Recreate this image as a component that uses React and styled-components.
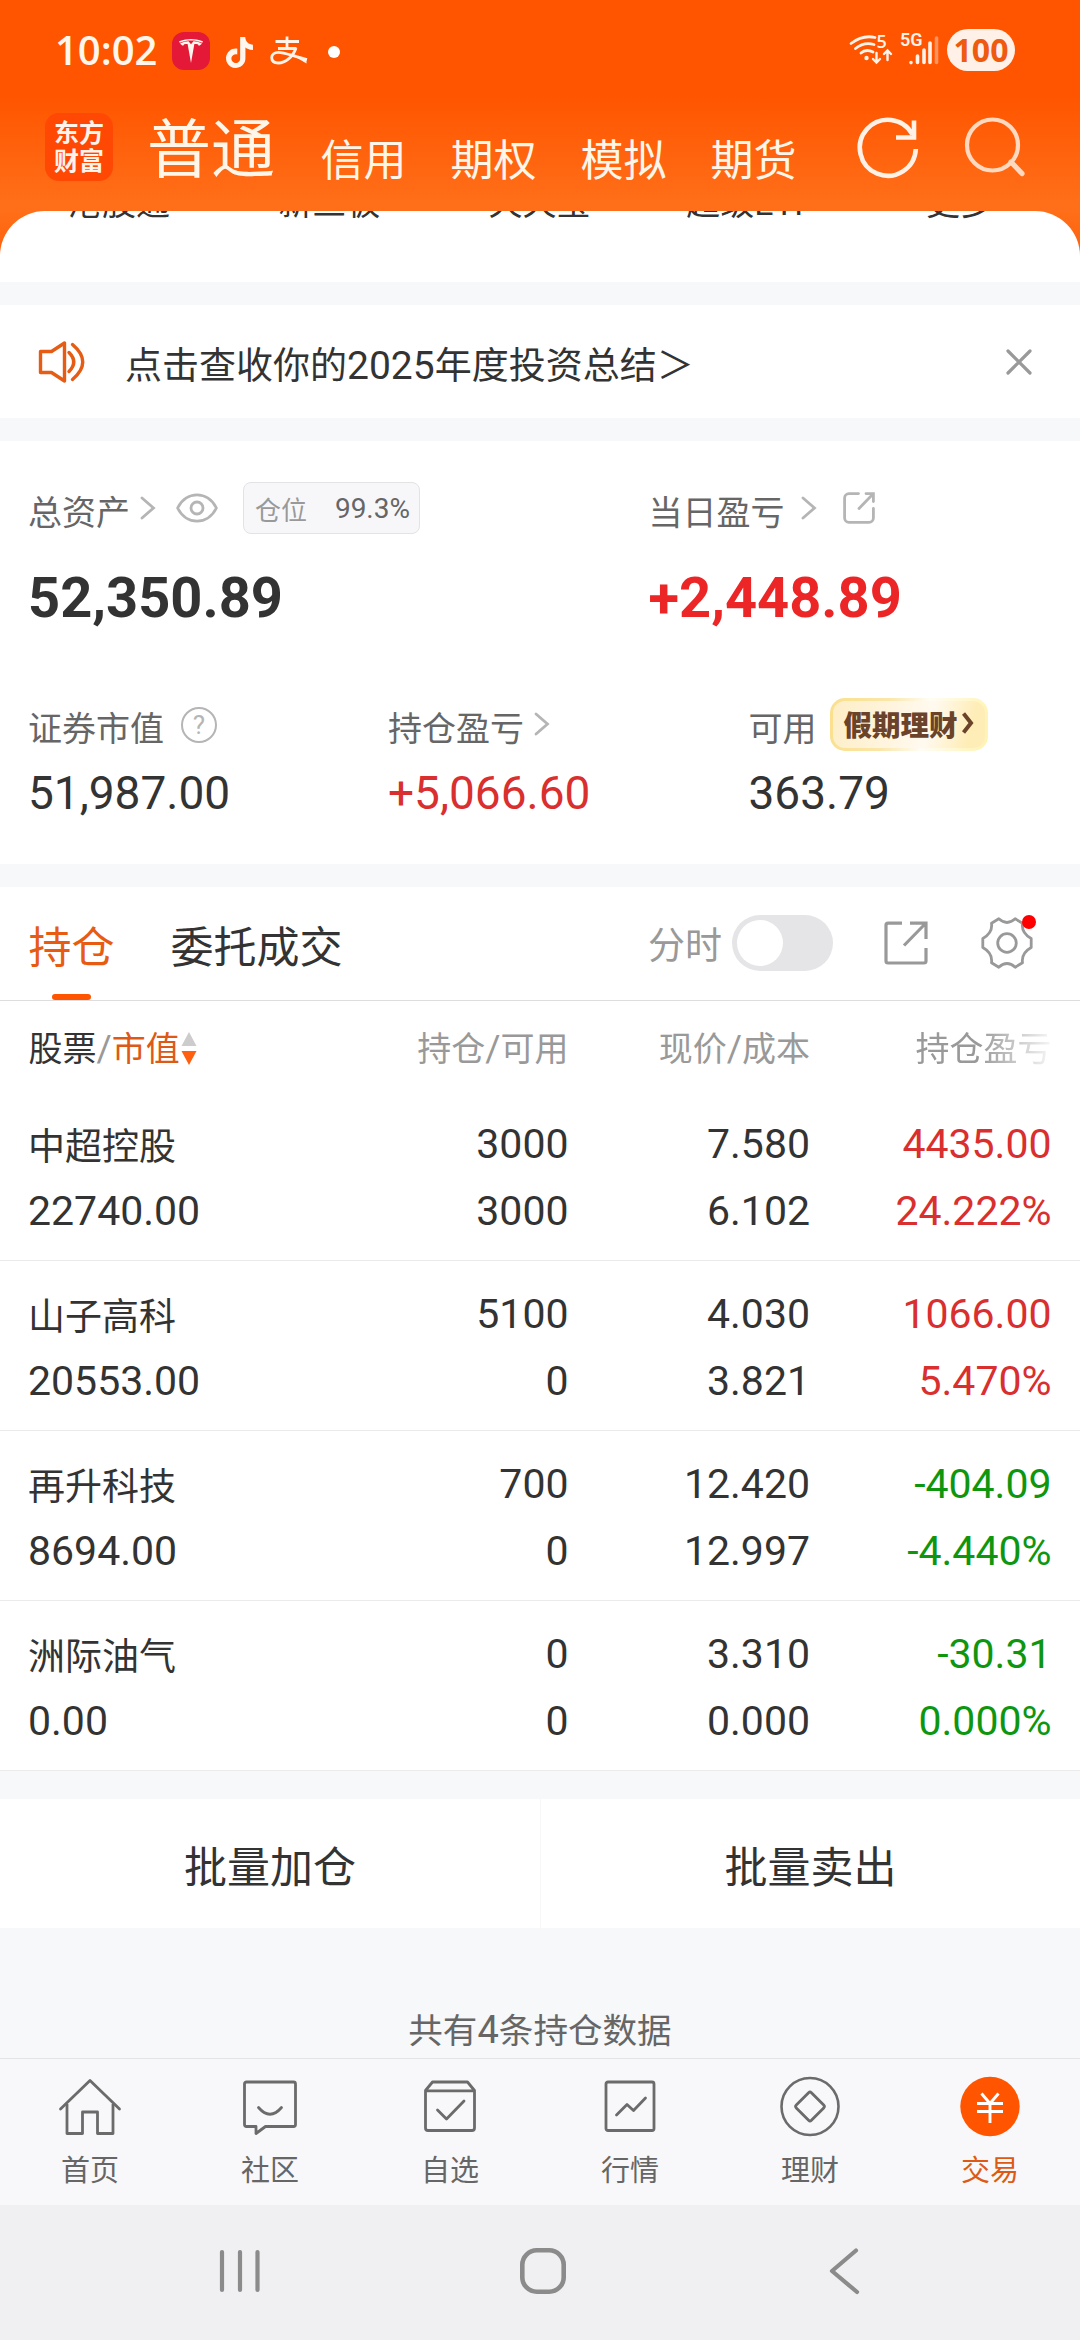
import React from "react";
import styled, { createGlobalStyle } from "styled-components";
import { SiTesla, SiTiktok } from "react-icons/si";

const shortcuts = ["港股通", "新三板", "天天宝", "超级ETF", "更多"];
const accounts = ["信用", "期权", "模拟", "期货"];

const holdings = [
  { name: "中超控股", value: "22740.00", qty: "3000", usable: "3000", price: "7.580", cost: "6.102", profit: "4435.00", rate: "24.222%", up: true },
  { name: "山子高科", value: "20553.00", qty: "5100", usable: "0", price: "4.030", cost: "3.821", profit: "1066.00", rate: "5.470%", up: true },
  { name: "再升科技", value: "8694.00", qty: "700", usable: "0", price: "12.420", cost: "12.997", profit: "-404.09", rate: "-4.440%", up: false },
  { name: "洲际油气", value: "0.00", qty: "0", usable: "0", price: "3.310", cost: "0.000", profit: "-30.31", rate: "0.000%", up: false },
];

const navItems = [
  { label: "首页", icon: <HomeIcon /> },
  { label: "社区", icon: <ChatIcon /> },
  { label: "自选", icon: <BoxIcon /> },
  { label: "行情", icon: <MarketIcon /> },
  { label: "理财", icon: <CoinIcon /> },
  { label: "交易", icon: <TradeIcon />, active: true },
];

export default function App() {
  return (
    <Screen>
      <GlobalStyle />
      <Header>
        <StatusBar>
          <Clock>10:02</Clock>
          <TeslaBadge>
            <SiTesla size={24} />
          </TeslaBadge>
          <TiktokSlot>
            <SiTiktok size={31} />
          </TiktokSlot>
          <AlipayIcon />
          <MoreDot />
          <StatusRight>
            <NetworkIcons />
            <Battery>100</Battery>
          </StatusRight>
        </StatusBar>
        <AccountBar>
          <Logo>
            <span>东方</span>
            <span>财富</span>
          </Logo>
          <AccountTabs>
            <AccountTab $active>普通</AccountTab>
            {accounts.map((a) => (
              <AccountTab key={a}>{a}</AccountTab>
            ))}
          </AccountTabs>
          <HeaderIcons />
        </AccountBar>
      </Header>

      <ShortcutWrap>
        <ShortcutCard>
          {shortcuts.map((s) => (
            <span key={s}>{s}</span>
          ))}
        </ShortcutCard>
      </ShortcutWrap>
      <Gap />

      <Notice>
        <SpeakerIcon />
        <NoticeText>
          点击查收你的<Num>2025</Num>年度投资总结＞
        </NoticeText>
        <CloseIcon />
      </Notice>
      <Gap />

      <Assets>
        <TopGrid>
          <div>
            <LabelRow>
              <Label>总资产</Label>
              <Chevron $left={10} />
              <EyeIcon />
              <Position>
                <span>仓位</span>
                <b>99.3%</b>
              </Position>
            </LabelRow>
            <Total>52,350.89</Total>
          </div>
          <div>
            <LabelRow>
              <Label>当日盈亏</Label>
              <Chevron $left={16} />
              <SmallShareIcon />
            </LabelRow>
            <Total $up>+2,448.89</Total>
          </div>
        </TopGrid>
        <SubGrid>
          <div>
            <LabelRow>
              <Label>证券市值</Label>
              <Question>?</Question>
            </LabelRow>
            <Amount>51,987.00</Amount>
          </div>
          <div>
            <LabelRow>
              <Label>持仓盈亏</Label>
              <Chevron $left={10} />
            </LabelRow>
            <Amount $up>+5,066.60</Amount>
          </div>
          <div>
            <LabelRow>
              <Label>可用</Label>
              <Promo>
                假期理财
                <svg width="12" height="22" viewBox="0 0 12 22" fill="none" stroke="#6a432a" strokeWidth="4">
                  <path d="M1.5 1.5L9 11L1.5 20.5" />
                </svg>
              </Promo>
            </LabelRow>
            <Amount>363.79</Amount>
          </div>
        </SubGrid>
      </Assets>
      <Gap />

      <Tabs>
        <Tab $active>持仓</Tab>
        <Tab>委托成交</Tab>
        <Tools>
          <ToolLabel>分时</ToolLabel>
          <Toggle>
            <i />
          </Toggle>
          <ShareIcon />
          <GearWrap>
            <GearIcon />
            <RedDot />
          </GearWrap>
        </Tools>
      </Tabs>

      <TableHead>
        <SortCell>
          股票<Slash>/</Slash>
          <em>市值</em>
          <svg width="16" height="34" viewBox="0 0 16 34">
            <path d="M8 0L15.5 14H0.5Z" fill="#cccccc" />
            <path d="M8 33L15.5 19H0.5Z" fill="#ff5f0f" />
          </svg>
        </SortCell>
        <span>
          持仓<Slash>/</Slash>可用
        </span>
        <span>
          现价<Slash>/</Slash>成本
        </span>
        <FadeCell>持仓盈亏</FadeCell>
      </TableHead>
      {holdings.map((h) => (
        <Row key={h.name}>
          <Cell>
            <Name>{h.name}</Name>
            <span>{h.value}</span>
          </Cell>
          <Cell $right>
            <span>{h.qty}</span>
            <span>{h.usable}</span>
          </Cell>
          <Cell $right>
            <span>{h.price}</span>
            <span>{h.cost}</span>
          </Cell>
          <Cell $right $color={h.up ? "#d92f2f" : "#0f960f"}>
            <span>{h.profit}</span>
            <span>{h.rate}</span>
          </Cell>
        </Row>
      ))}

      <Batch>
        <BatchButton>批量加仓</BatchButton>
        <BatchButton>批量卖出</BatchButton>
      </Batch>
      <Summary>
        共有<Num $size={38}>4</Num>条持仓数据
      </Summary>

      <Nav>
        {navItems.map((n) => (
          <NavItem key={n.label} $active={n.active}>
            {n.icon}
            <span>{n.label}</span>
          </NavItem>
        ))}
      </Nav>
      <SystemBar>
        <svg width="46" height="50" viewBox="0 0 46 50" stroke="#8b8b8b" strokeWidth="4.2" strokeLinecap="round">
          <path d="M5 6V44M23 6V44M40.5 6V44" />
        </svg>
        <svg width="50" height="50" viewBox="0 0 50 50" fill="none" stroke="#8b8b8b" strokeWidth="4.6">
          <rect x="4.3" y="4.3" width="41.4" height="41.4" rx="14.5" />
        </svg>
        <svg width="46" height="50" viewBox="0 0 46 50" fill="none" stroke="#8b8b8b" strokeWidth="4.2" strokeLinecap="round" strokeLinejoin="round">
          <path d="M34 4.5L10 25L35 46" />
        </svg>
      </SystemBar>
    </Screen>
  );
}

/* ---------- icons ---------- */

function AlipayIcon() {
  return (
    <svg width="38" height="30" viewBox="0 0 38 30" fill="none" stroke="#fff3ea" strokeWidth="2.8">
      <path d="M5.5 5.5H29M17 0.5V12.5M8 12.5H26.5" />
      <path d="M26 12C23 21 15 27 8.5 27C3.5 27 1.7 24.5 1.7 21.5C1.7 18.5 4.5 16.3 8.5 16.3C15 16.3 22 20 37 23.5" />
      <path d="M22 19L36.5 22.5V27.5Z" fill="#fff3ea" stroke="none" />
    </svg>
  );
}

function NetworkIcons() {
  return (
    <svg width="96" height="40" viewBox="0 0 96 40" fill="none" stroke="#fff3ea" strokeWidth="2.8" strokeLinecap="round">
      <path d="M4 13.5Q16 4.500 28 7.500" />
      <path d="M8.5 18.500Q17 11.500 27 14.500" />
      <path d="M14 23Q19 18.500 26 22" />
      <circle cx="19.5" cy="28" r="2.2" fill="#fff3ea" stroke="none" />
      <path d="M29.5 23V32M26 29L29.5 32.5L33 29" strokeWidth="2.4" />
      <path d="M40.500 30V21M37 24L40.5 20.5L44 24" strokeWidth="2.4" />
      <text x="29.500" y="18" fontSize="18" fontWeight="600" fontFamily="Open Sans, sans-serif" fill="#fff3ea" stroke="none">5</text>
      <text x="53" y="15.5" fontSize="18" fontWeight="600" fontFamily="Roboto, sans-serif" fill="#fff3ea" stroke="none">5G</text>
      <g strokeWidth="3.6">
        <path d="M64 32.500V32.600M70.500 26V32.500M77 20V32.500M83 13V32.500" />
        <path d="M89.500 8V32.500" opacity="0.4" />
      </g>
    </svg>
  );
}

function HeaderIcons() {
  return (
    <HeaderSvg width="176" height="72" viewBox="0 0 176 72" fill="none" stroke="#fff1e6">
      <path d="M63.8 36A28 28 0 1 1 60.500 21.500" strokeWidth="4.6" />
      <path d="M62 7.500V24.500H44" strokeWidth="4.6" />
      <g stroke="#ffd9bf" strokeWidth="4.2">
        <circle cx="140.5" cy="32" r="25.5" />
        <path d="M159 49L170 60.5" strokeWidth="5.2" strokeLinecap="round" />
      </g>
    </HeaderSvg>
  );
}

function SpeakerIcon() {
  return (
    <svg width="50" height="44" viewBox="0 0 50 44" fill="none" stroke="#e65c14" strokeWidth="3.4" strokeLinejoin="round" strokeLinecap="round">
      <path d="M3.500 11.500H14.500L27.500 3V41L14.500 32.500H3.500Z" />
      <path d="M32 12.500Q41.500 22 32 31.500" />
      <path d="M35.500 4.500Q56 22 35.500 39.500" />
    </svg>
  );
}

function CloseIcon() {
  return (
    <svg width="28" height="28" viewBox="0 0 28 28" stroke="#999999" strokeWidth="3.2" strokeLinecap="round">
      <path d="M3 3L25 25M25 3L3 25" />
    </svg>
  );
}

function ChevronSvg({ className }) {
  return (
    <svg className={className} width="16" height="24" viewBox="0 0 16 24" fill="none" stroke="#b5b5b5" strokeWidth="2.8" strokeLinecap="round">
      <path d="M2 2L13.5 12L2 22" />
    </svg>
  );
}

function EyeSvg({ className }) {
  return (
    <svg className={className} width="42" height="30" viewBox="0 0 42 30" fill="none" stroke="#b5b5b5" strokeWidth="2.8">
      <path d="M1.6 15C10 -2.500 32 -2.500 40.4 15C32 32.500 10 32.500 1.6 15Z" strokeLinejoin="round" />
      <circle cx="21" cy="15" r="6" />
    </svg>
  );
}

function SmallShareSvg({ className }) {
  return (
    <svg className={className} width="32" height="32" viewBox="0 0 32 32" fill="none" stroke="#b5b5b5" strokeWidth="2.8" strokeLinecap="round">
      <path d="M15.5 1.6H6A4.4 4.4 0 0 0 1.6 6V26A4.4 4.4 0 0 0 6 30.4H26A4.4 4.4 0 0 0 30.4 26V16.5" />
      <path d="M23 1.6H30.4V9.5M30 2L16 16.5" />
    </svg>
  );
}

function ShareSvg({ className }) {
  return (
    <svg className={className} width="44" height="44" viewBox="0 0 44 44" fill="none" stroke="#999999" strokeWidth="3.2">
      <path d="M18 2.2H4Q2 2.2 2 4.2V40Q2 42 4 42H40Q42 42 42 40V27" />
      <path d="M26 2.2H42V18M41 3L20 24.5" />
    </svg>
  );
}

function GearIcon() {
  return (
    <svg width="52" height="52" viewBox="0 0 52 52" fill="none" stroke="#999999" strokeWidth="2.8" strokeLinejoin="round">
      <path d="M17.8 1.8L10.5 6.2C11.5 13 9 17.5 1.8 21.5V30.5C9 34.5 11.5 39 10.5 45.8L17.8 50.2C23 45.5 29 45.5 34.2 50.2L41.5 45.8C40.5 39 43 34.5 50.2 30.5V21.5C43 17.5 40.5 13 41.5 6.2L34.2 1.8C29 6.5 23 6.5 17.8 1.8Z" />
      <circle cx="26" cy="26" r="9.3" />
    </svg>
  );
}

function HomeIcon() {
  return (
    <NavSvg>
      <path d="M2.5 35L32 6.5L61.5 35" strokeLinecap="round" />
      <path d="M9 30V59.5H24.5V38H39.5V59.5H55V30" />
    </NavSvg>
  );
}

function ChatIcon() {
  return (
    <NavSvg>
      <path d="M8.5 8H55.5Q57.5 8 57.5 10V50.5Q57.5 52.5 55.5 52.5H27.5L18 59.5V52.5H8.5Q6.5 52.5 6.5 50.5V10Q6.5 8 8.5 8Z" />
      <path d="M20.5 33.5Q32 47 43.5 33.5" strokeLinecap="round" />
    </NavSvg>
  );
}

function BoxIcon() {
  return (
    <NavSvg>
      <path d="M7.5 16.5L14.5 8H49.5L56.5 16.5V54Q56.5 56.5 54 56.5H10Q7.5 56.5 7.5 54ZM7.5 16.8H56.5" />
      <path d="M19.5 36L28.5 45L46 27" strokeLinecap="round" />
    </NavSvg>
  );
}

function MarketIcon() {
  return (
    <NavSvg>
      <rect x="8" y="8" width="48" height="48.5" rx="2" />
      <path d="M18.5 41L29 30.5L35.5 36.5L47.5 24" strokeLinecap="round" />
    </NavSvg>
  );
}

function CoinIcon() {
  return (
    <NavSvg>
      <circle cx="32" cy="32.5" r="28.5" strokeWidth="2.6" />
      <rect x="21.3" y="21.8" width="21.4" height="21.4" rx="2" transform="rotate(45 32 32.5)" />
    </NavSvg>
  );
}

function TradeIcon() {
  return (
    <NavSvg>
      <circle cx="32" cy="32.5" r="29.7" fill="#ff5500" stroke="none" />
      <g stroke="#ffffff" strokeWidth="2.9">
        <path d="M23.5 19.5L32 29.5L40.5 19.5M19 29.5H45M19 37.5H45M32 29.5V49" />
      </g>
    </NavSvg>
  );
}

function NavSvg({ children }) {
  return (
    <svg width="64" height="64" viewBox="0 0 64 64" fill="none" stroke="#6b6b6b" strokeWidth="2.8" strokeLinejoin="round">
      {children}
    </svg>
  );
}

/* ---------- styles ---------- */

const GlobalStyle = createGlobalStyle`
  * {
    box-sizing: border-box;
  }

  body {
    margin: 0;
    background: #f7f8fa;
  }

  svg {
    display: block;
    flex: none;
  }
`;

const Screen = styled.div`
  width: 1080px;
  height: 2340px;
  display: flex;
  flex-direction: column;
  overflow: hidden;
  background: #f7f8fa;
  color: #333333;
  font-family: Roboto, "Noto Sans CJK SC", sans-serif;
  white-space: nowrap;
`;

const Header = styled.header`
  height: 211px;
  flex: none;
  background: linear-gradient(#ff5500 0, #ff5500 96px, #ff6e18 200px);
`;

const StatusBar = styled.div`
  height: 100px;
  display: flex;
  align-items: center;
  padding: 2px 65px 0 55px;
  color: #fff6ee;
`;

const Clock = styled.div`
  width: 117px;
  padding-bottom: 3px;
  font: 600 40px/50px "Open Sans", sans-serif;
`;

const TeslaBadge = styled.div`
  width: 38px;
  height: 38px;
  border-radius: 12px;
  background: #e31937;
  display: flex;
  align-items: center;
  justify-content: center;
`;

const TiktokSlot = styled.div`
  margin: 2px 15px 0 14px;
`;

const MoreDot = styled.div`
  width: 12px;
  height: 12px;
  border-radius: 50%;
  margin: 1px 0 0 20px;
  background: #ffffff;
`;

const StatusRight = styled.div`
  display: flex;
  align-items: center;
  margin-left: auto;
  padding-bottom: 2px;
  gap: 4px;
`;

const Battery = styled.div`
  width: 68px;
  height: 42px;
  border-radius: 21px;
  background: #fff1e8;
  color: #ee5a10;
  text-align: center;
  font: 700 32px/41px "Open Sans", sans-serif;
`;

const AccountBar = styled.div`
  height: 111px;
  display: flex;
  align-items: flex-start;
  padding: 13px 52px 0 45px;
`;

const HeaderSvg = styled.svg`
  margin-left: auto;
`;

const Logo = styled.div`
  width: 68px;
  height: 68px;
  border-radius: 14px;
  background: #ff4804;
  color: #fff3ea;
  display: flex;
  flex-direction: column;
  align-items: center;
  padding-top: 7px;
  font-size: 25px;
  font-weight: 700;
  line-height: 28px;
`;

const AccountTabs = styled.div`
  display: flex;
  gap: 44px;
  margin-left: 34px;
  height: 80px;
`;

const AccountTab = styled.div`
  color: #fff6ea;
  font-size: ${({ $active }) => ($active ? 64 : 43)}px;
  line-height: ${({ $active }) => ($active ? 76 : 96)}px;
  margin-right: ${({ $active }) => ($active ? 1.5 : 0)}px;
`;

const ShortcutWrap = styled.div`
  height: 71px;
  flex: none;
  background: linear-gradient(#ff6e18, #ff5a08);
`;

const ShortcutCard = styled.div`
  height: 71px;
  border-radius: 45px 45px 0 0;
  background: #ffffff;
  overflow: hidden;
  display: grid;
  grid-template-columns: repeat(5, 1fr);
  padding: 0 15px 0 14px;
  text-align: center;
  font-size: 34px;

  span {
    height: 40px;
    line-height: 40px;
    margin-top: -28px;
  }
`;

const Gap = styled.div`
  height: 23px;
  flex: none;
`;

const Notice = styled.section`
  height: 113px;
  flex: none;
  display: flex;
  align-items: center;
  padding: 0 47px 0 37px;
  background: #ffffff;
`;

const NoticeText = styled.div`
  flex: 1;
  margin-left: 38px;
  padding-top: 10px;
  font-size: 37px;
  line-height: 50px;
`;

const Num = styled.span`
  font-size: ${({ $size }) => $size || 39}px;
`;

const Assets = styled.section`
  height: 423px;
  flex: none;
  padding: 42px 0 0 28px;
  background: #ffffff;
`;

const TopGrid = styled.div`
  display: grid;
  grid-template-columns: 620.5px 1fr;
`;

const SubGrid = styled.div`
  display: grid;
  grid-template-columns: 360px 360.5px 1fr;
  margin-top: 71px;
`;

const LabelRow = styled.div`
  height: 50px;
  display: flex;
  align-items: center;
`;

const Label = styled.div`
  padding-top: 10px;
  font-size: 34px;
  line-height: 40px;
  color: #666666;
`;

const Chevron = styled(ChevronSvg)`
  margin-left: ${({ $left }) => $left}px;
`;

const EyeIcon = styled(EyeSvg)`
  margin-left: 20px;
`;

const SmallShareIcon = styled(SmallShareSvg)`
  margin-left: 26px;
`;

const Position = styled.div`
  width: 177px;
  height: 52px;
  margin-left: 25px;
  padding: 0 9px 0 11px;
  border: 1px solid #e3e3e6;
  border-radius: 8px;
  background: #f7f7fa;
  display: flex;
  align-items: center;
  justify-content: space-between;
  font-size: 26px;
  color: #999999;

  b {
    font-size: 28px;
    font-weight: 400;
    color: #666666;
  }
`;

const Total = styled.div`
  margin-top: 35px;
  font-size: 56px;
  font-weight: 700;
  line-height: 60px;
  color: ${({ $up }) => ($up ? "#ec2626" : "#333333")};
`;

const Amount = styled.div`
  margin-top: 19px;
  font-size: 46px;
  line-height: 50px;
  color: ${({ $up }) => ($up ? "#d92f2f" : "#333333")};
`;

const Question = styled.div`
  width: 36px;
  height: 36px;
  margin: 2px 0 0 17px;
  border: 2.6px solid #b5b5b5;
  border-radius: 50%;
  color: #b5b5b5;
  font-size: 26px;
  line-height: 32px;
  text-align: center;
`;

const Promo = styled.div`
  width: 158px;
  height: 53px;
  margin-left: 13px;
  padding: 0 0 2px 11px;
  border: 3px solid transparent;
  border-radius: 15px;
  background:
    linear-gradient(105deg, #fdeec6 0%, #fff4dc 35%, #fffaf0 62%, #ffedb8 88%) padding-box,
    linear-gradient(100deg, #fae08c 0%, #fae6a8 35%, #fffdf5 60%, #fff3b0 100%) border-box;
  display: flex;
  align-items: center;
  gap: 4px;
  font-size: 28.5px;
  font-weight: 800;
  color: #6a432a;
`;

const Tabs = styled.div`
  height: 114px;
  flex: none;
  display: flex;
  padding-left: 28.5px;
  gap: 56px;
  border-bottom: 1px solid #dddddd;
  background: #ffffff;
`;

const Tab = styled.div`
  position: relative;
  font-size: 43px;
  line-height: 123px;
  height: 113px;
  color: ${({ $active }) => ($active ? "#e85b12" : "#333333")};

  &::after {
    content: "";
    display: ${({ $active }) => ($active ? "block" : "none")};
    position: absolute;
    left: 23.5px;
    bottom: 0;
    width: 39px;
    height: 6px;
    border-radius: 3px;
    background: #ff5500;
  }
`;

const Tools = styled.div`
  margin-left: auto;
  padding-right: 47px;
  height: 112px;
  display: flex;
  align-items: center;
`;

const ToolLabel = styled.div`
  padding-top: 8px;
  font-size: 37px;
  line-height: 40px;
  color: #999999;
`;

const Toggle = styled.div`
  width: 101px;
  height: 56px;
  margin-left: 10px;
  padding: 5px;
  border-radius: 28px;
  background: #e5e5e7;

  i {
    display: block;
    width: 46px;
    height: 46px;
    border-radius: 50%;
    background: #ffffff;
  }
`;

const ShareIcon = styled(ShareSvg)`
  margin-left: 51px;
`;

const GearWrap = styled.div`
  position: relative;
  margin-left: 53px;
`;

const RedDot = styled.div`
  position: absolute;
  top: -2px;
  right: -3px;
  width: 14px;
  height: 14px;
  border-radius: 50%;
  background: #ff0000;
`;

const TableHead = styled.div`
  height: 90px;
  flex: none;
  display: grid;
  grid-template-columns: 298.5px repeat(3, 241.5px);
  align-items: center;
  padding: 6px 0 0 28.5px;
  background: #ffffff;
  font-size: 34px;
  line-height: 40px;
  text-align: right;
  color: #999999;
`;

const SortCell = styled.div`
  display: flex;
  align-items: center;
  color: #333333;

  em {
    font-style: normal;
    color: #dc5a16;
  }

  svg {
    margin-left: 1px;
  }
`;

const Slash = styled.span`
  font-size: 37px;
  color: #999999;
`;

const FadeCell = styled.span`
  mask-image: linear-gradient(to right, #000 169px, transparent 248px);
`;

const Row = styled.div`
  height: 170px;
  flex: none;
  display: grid;
  grid-template-columns: 299px repeat(3, 241.5px);
  padding: 20px 0 0 28px;
  border-bottom: 1px solid #ebebeb;
  background: #ffffff;
`;

const Cell = styled.div`
  display: flex;
  flex-direction: column;
  text-align: ${({ $right }) => ($right ? "right" : "left")};
  font-size: 41px;
  line-height: 66.6px;
  color: ${({ $color }) => $color || "#333333"};
`;

const Name = styled.div`
  height: 66.6px;
  padding-top: 4px;
  font-size: 37px;
`;

const Batch = styled.div`
  height: 129px;
  flex: none;
  margin-top: 28px;
  display: grid;
  grid-template-columns: 1fr 1fr;
  background: #ffffff;
`;

const BatchButton = styled.div`
  padding-top: 4px;
  text-align: center;
  font-size: 43px;
  line-height: 130px;

  & + & {
    border-left: 1px solid #f7f7f7;
  }
`;

const Summary = styled.div`
  height: 130px;
  flex: none;
  padding-top: 82px;
  text-align: center;
  font-size: 34.6px;
  line-height: 40px;
  color: #666666;
`;

const Nav = styled.nav`
  height: 147px;
  flex: none;
  display: grid;
  grid-template-columns: repeat(6, 1fr);
  padding-top: 15px;
  border-top: 1px solid #e2e4e8;
  background: #f8f8fa;
`;

const NavItem = styled.div`
  display: flex;
  flex-direction: column;
  align-items: center;
  color: ${({ $active }) => ($active ? "#dc5a16" : "#666666")};
  font-size: 29px;
  line-height: 40px;

  span {
    margin-top: 13px;
  }
`;

const SystemBar = styled.div`
  flex: 1;
  display: flex;
  align-items: center;
  justify-content: space-between;
  padding: 0 212px 3px 217px;
  background: #f0f0f2;
`;
